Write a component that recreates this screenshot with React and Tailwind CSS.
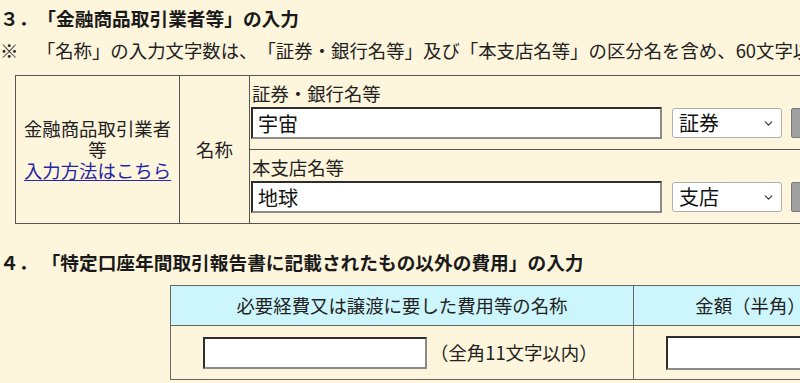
import React from 'react';
import { ChevronDown } from 'lucide-react';

const TextBox = ({ value = '', className = '' }) => (
  <input
    type="text"
    defaultValue={value}
    className={`bg-white border-2 border-t-[#2e2e2e] border-l-[#2e2e2e] border-b-[#8a8a8a] border-r-[#8a8a8a] px-[5px] text-[20px] leading-none text-[#111] outline-none ${className}`}
  />
);

const Picker = ({ value, options }) => (
  <div className="relative w-[110px] h-[30px] mt-[1px]">
    <select
      defaultValue={value}
      className="appearance-none w-full h-full bg-white border border-[#b0b0b0] rounded-[3px] pl-[6px] text-[20px] leading-none text-[#111] outline-none"
    >
      {options.map((o) => (
        <option key={o}>{o}</option>
      ))}
    </select>
    <ChevronDown className="absolute right-[7px] top-[9px] w-[13px] h-[13px] text-[#333] pointer-events-none" strokeWidth={2} />
  </div>
);

const NameRow = ({ label, value, selected, options, last }) => (
  <div className={`pl-[1px] ${last ? 'h-[73px]' : 'h-[74px] border-b border-[#555]'}`}>
    <div className="pt-[5px] pl-[1px] leading-[24px]">{label}</div>
    <div className="flex items-start mt-[2px]">
      <TextBox value={value} className="w-[411px] h-[32px]" />
      <div className="ml-[10px]">
        <Picker value={selected} options={options} />
      </div>
      <button className="ml-[9px] mt-[1px] w-[70px] h-[30px] bg-[#a0a0a0] border border-[#7a7a7a] rounded-[2px]" />
    </div>
  </div>
);

export default function App() {
  return (
    <div className="w-[800px] h-[383px] overflow-hidden bg-[#fdf5dc] text-[#222] text-[18.4px] [text-spacing-trim:space-all] font-['Noto_Sans_CJK_JP','Noto_Sans',sans-serif]">
      {/* section 3 */}
      <h2 className="pt-[6px] text-[18.7px] leading-[24px] font-bold whitespace-nowrap text-[#1a1a1a]">
        ３．「金融商品取引業者等」の入力
      </h2>
      <p className="mt-[8px] leading-[24px] whitespace-nowrap">
        ※　「名称」の入力文字数は、「証券・銀行名等」及び「本支店名等」の区分名を含め、60文字以内で入力してください。
      </p>

      <div className="ml-[15px] mt-[13px] flex w-[1000px] h-[149px] border border-[#555]">
        <div className="w-[164px] border-r border-[#555] flex flex-col items-center justify-center text-center leading-[21px]">
          <span>金融商品取引業者</span>
          <span>等</span>
          <a href="#" className="text-[#2626a8] underline underline-offset-2">入力方法はこちら</a>
        </div>
        <div className="w-[70px] border-r border-[#555] flex items-center justify-center">名称</div>
        <div className="flex-1 flex flex-col">
          <NameRow label="証券・銀行名等" value="宇宙" selected="証券" options={['証券', '銀行']} />
          <NameRow label="本支店名等" value="地球" selected="支店" options={['支店', '本店']} last />
        </div>
      </div>

      {/* section 4 */}
      <h2 className="mt-[26px] text-[18.7px] leading-[24px] font-bold whitespace-nowrap text-[#1a1a1a]">
        ４． 「特定口座年間取引報告書に記載されたもの以外の費用」の入力
      </h2>

      <div className="ml-[170px] mt-[11px] w-[800px] border border-[#666]">
        <div className="flex h-[40px] bg-[#cdf6fc] border-b border-[#666]">
          <div className="w-[463px] border-r border-[#666] flex items-center justify-center">
            必要経費又は譲渡に要した費用等の名称
          </div>
          <div className="w-[234px] border-r border-[#666] flex items-center justify-center">
            金額（半角）
          </div>
        </div>
        <div className="flex h-[53px]">
          <div className="w-[463px] border-r border-[#666] flex items-center pl-[32px]">
            <TextBox className="w-[224px] h-[32px]" />
            <span className="ml-[3px]">（全角11文字以内）</span>
          </div>
          <div className="w-[234px] border-r border-[#666] flex items-center pl-[32px]">
            <TextBox className="w-[168px] h-[34px]" />
          </div>
        </div>
      </div>
    </div>
  );
}
